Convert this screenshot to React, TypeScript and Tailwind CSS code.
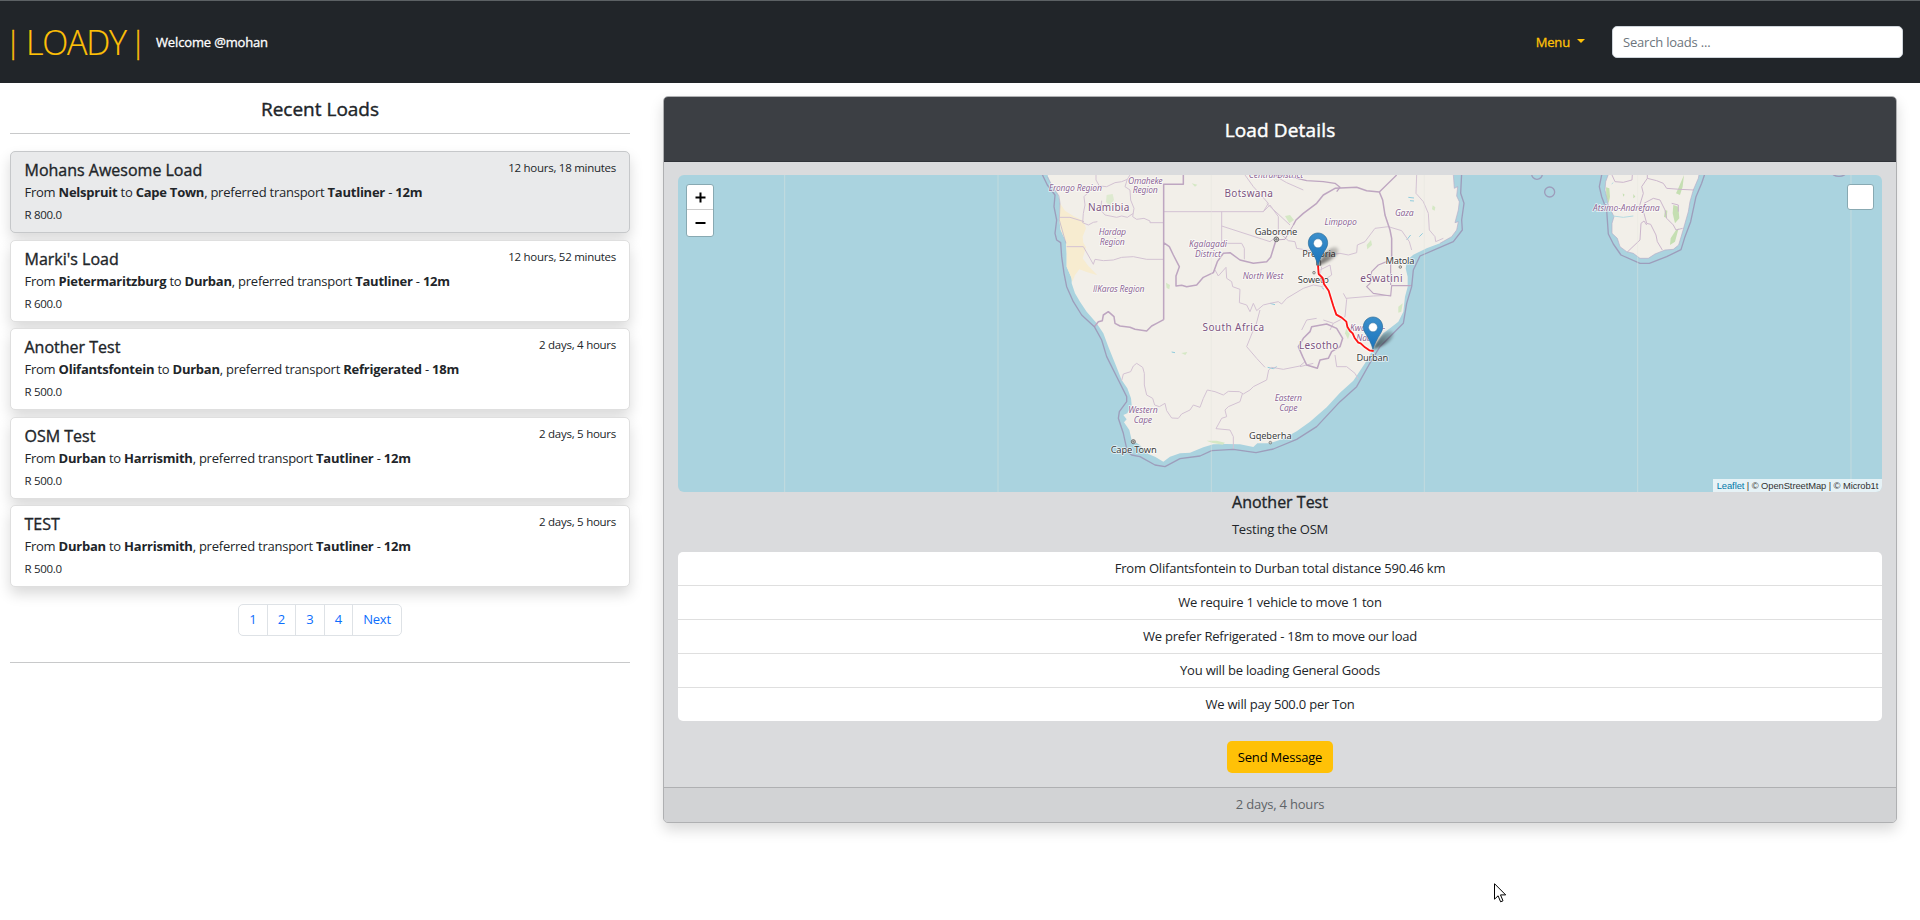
import React from "react";

type Load = {
  title: string;
  from: string;
  to: string;
  transport: string;
  size: string;
  price: string;
  age: string;
  active?: boolean;
};

const loads: Load[] = [
  { title: "Mohans Awesome Load", from: "Nelspruit", to: "Cape Town", transport: "Tautliner", size: "12m", price: "R 800.0", age: "12 hours, 18 minutes", active: true },
  { title: "Marki's Load", from: "Pietermaritzburg", to: "Durban", transport: "Tautliner", size: "12m", price: "R 600.0", age: "12 hours, 52 minutes" },
  { title: "Another Test", from: "Olifantsfontein", to: "Durban", transport: "Refrigerated", size: "18m", price: "R 500.0", age: "2 days, 4 hours" },
  { title: "OSM Test", from: "Durban", to: "Harrismith", transport: "Tautliner", size: "12m", price: "R 500.0", age: "2 days, 5 hours" },
  { title: "TEST", from: "Durban", to: "Harrismith", transport: "Tautliner", size: "12m", price: "R 500.0", age: "2 days, 5 hours" },
];

const details = [
  "From Olifantsfontein to Durban total distance 590.46 km",
  "We require 1 vehicle to move 1 ton",
  "We prefer Refrigerated - 18m to move our load",
  "You will be loading General Goods",
  "We will pay 500.0 per Ton",
];

function Header() {
  return (
    <header className="flex h-[83px] shrink-0 items-center border-t border-[#5c6164] bg-[#212529] pl-[5px] pr-[17px]">
      <div className="flex w-[151px] items-center text-[34px] font-light leading-[50px] text-[#ffc107]">
        <span className="w-[21px] text-[30px] [-webkit-text-stroke:0.3px]">|</span>
        <span className="w-[104px] tracking-[-1.2px] [-webkit-text-stroke:0.2px]">LOADY</span>
        <span className="text-[30px] [-webkit-text-stroke:0.3px]">|</span>
      </div>
      <div className="text-[13px] leading-5 tracking-[-0.15px] text-white [-webkit-text-stroke:0.3px]">Welcome @mohan</div>
      <div className="ml-auto flex items-center">
        <span className="text-[13px] leading-5 tracking-[-0.15px] text-[#ffc107] [-webkit-text-stroke:0.3px]">Menu</span>
        <span className="mb-[3px] ml-[7px] mr-[27px] h-0 w-0 border-x-[4px] border-t-[4px] border-x-transparent border-t-[#ffc107]" />
        <input
          className="h-8 w-[291px] rounded-[5px] border border-[#ced4da] bg-white px-[10px] text-[13px] tracking-[-0.2px] text-[#212529] outline-none placeholder:text-[#6c757d]"
          placeholder="Search loads ..."
        />
      </div>
    </header>
  );
}

function LoadCard({ load }: { load: Load }) {
  return (
    <article
      className={
        "flex h-[82px] flex-col rounded-[5px] border pl-[13.5px] pr-[13px] pt-[8px] shadow-[0_7px_14px_rgba(0,0,0,0.15)] " +
        (load.active ? "border-[#c6c8ca] bg-[#e9eaeb]" : "border-[#dfdfdf] bg-white")
      }
    >
      <div className="flex h-[22px] items-start justify-between">
        <h2 className="text-[16px] leading-[20px] [-webkit-text-stroke:0.35px]">{load.title}</h2>
        <span className="text-[11.5px] leading-4 tracking-[-0.27px]">{load.age}</span>
      </div>
      <p className="text-[13px] leading-5 tracking-[-0.24px]">
        From <b>{load.from}</b> to <b>{load.to}</b>, preferred transport <b>{load.transport}</b> - <b>{load.size}</b>
      </p>
      <p className="mt-[4px] text-[11.5px] leading-[18px] tracking-[-0.3px]">{load.price}</p>
    </article>
  );
}

function RecentLoads() {
  return (
    <section className="flex w-[620px] flex-col">
      <h1 className="h-[50px] pt-[12px] text-center text-[19px] leading-[28px] [-webkit-text-stroke:0.4px]">Recent Loads</h1>
      <hr className="border-t border-[#c8c9ca]" />
      <div className="mt-[17px] flex flex-col gap-[6.5px]">
        {loads.map((load) => (
          <LoadCard key={load.title} load={load} />
        ))}
      </div>
      <nav className="mt-[17px] flex h-8 items-stretch self-center rounded-[5px] border border-[#dee2e6] bg-white text-[13px] tracking-[-0.2px] text-[#0d6efd]">
        {["1", "2", "3", "4"].map((page) => (
          <a key={page} className="flex w-[28.5px] items-center justify-center border-r border-[#dee2e6]">{page}</a>
        ))}
        <a className="flex w-[48px] items-center justify-center">Next</a>
      </nav>
      <hr className="mt-[26px] border-t border-[#c8c9ca]" />
    </section>
  );
}

type LabelProps = { x: number; y: number; w: number; kind: "country" | "region" | "city"; children: string };

function MapLabel({ x, y, w, kind, children }: LabelProps) {
  const look =
    kind === "country"
      ? "fill-[#7d5580] text-[30px]"
      : kind === "region"
        ? "fill-[#8f6896] text-[26px] italic"
        : "fill-[#3d3d3d] text-[28px]";
  return (
    <text
      x={x}
      y={y}
      textLength={w}
      textAnchor="middle"
      className={look}
      stroke="#ffffff"
      strokeOpacity={0.7}
      strokeWidth={5}
      strokeLinejoin="round"
      paintOrder="stroke"
      fontFamily='"Noto Sans", sans-serif'
    >
      {children}
    </text>
  );
}

function Pin({ x, y }: { x: number; y: number }) {
  return (
    <g transform={`translate(${x} ${y})`}>
      <path d="M0 0C8-20 22-46 46-54C62-58 66-44 56-32C40-14 14-4 0 0Z" fill="url(#shade)" filter="url(#soft)" />
      <path
        d="M0 0C-5-18-13-32-21-45C-26-53-29-59-29-67C-29-84-16-97 0-97C16-97 29-84 29-67C29-59 26-53 21-45C13-32 5-18 0 0Z"
        fill="url(#pin)"
        stroke="#2e6c97"
        strokeWidth={2}
      />
      <circle cx={0} cy={-66} r={13.5} fill="#fff" stroke="#2e6c97" strokeWidth={1.5} />
    </g>
  );
}

const land = {
  africa:
    "M20 0L24 20L35 45L55 75L60 100L58 150L62 180L78 215L80 250L80 290L95 325L95 340L105 370L120 395L140 425L170 460L190 490L205 530L225 580L245 630L262 655L273 685L275 705L262 730L250 735L260 748L252 757L268 780L275 810L300 825L312 842L325 852L345 860L370 875L390 860L420 850L450 848L490 832L520 823L560 822L600 823L640 831L652 820L690 820L730 806L770 784L810 755L860 712L900 668L940 632L955 610L975 580L995 545L1010 520L1030 490L1050 475L1075 455L1090 425L1095 380L1103 350L1103 320L1097 295L1102 270L1120 254L1160 235L1200 220L1235 200L1250 180L1255 155L1245 158L1255 120L1258 95L1250 78L1253 50L1243 55L1240 0Z",
  madagascar:
    "M510 0L497 35L495 60L505 105L522 140L516 160L516 190L532 205L540 230L560 245L580 250L600 265L625 265L645 252L675 240L700 238L716 225L725 195L735 160L745 125L750 95L760 60L775 25L780 0Z",
};

function LoadMap() {
  return (
    <div className="relative h-[317px] overflow-hidden rounded-[6px] bg-[#aad3df]">
      <svg className="block h-[317px] w-[1204px]" viewBox="678 175 1204 317" fill="none">
        <defs>
          <linearGradient id="pin" x1="0" y1="0" x2="0" y2="1">
            <stop offset="0" stopColor="#3c8fcb" />
            <stop offset="1" stopColor="#1a74bd" />
          </linearGradient>
          <linearGradient id="shade" x1="0" y1="1" x2="1" y2="0">
            <stop offset="0" stopColor="#000" stopOpacity="0.6" />
            <stop offset="0.5" stopColor="#000" stopOpacity="0.4" />
            <stop offset="1" stopColor="#000" stopOpacity="0.12" />
          </linearGradient>
          <filter id="soft" x="-30%" y="-30%" width="160%" height="160%">
            <feGaussianBlur stdDeviation="4.5" />
          </filter>
        </defs>
        <g transform="translate(1040 170) scale(0.33333)" strokeLinejoin="round">
          <path d={land.africa} fill="#f2efe9" />
          <path d="M60 100L75 122L100 138L130 152L138 175L128 200L130 218L148 248L138 232L128 265L145 288L172 316L140 306L118 298L105 315L97 335L93 320L80 290L80 250L78 215L62 180L58 150Z" fill="#f7ecd0" />
          <g fill="#d5e8c5">
            <path d="M200 75L218 72L222 90L208 108L198 95Z" opacity={0.7} />
            <path d="M378 338L390 345L388 358L380 354Z" />
            <path d="M424 549L442 546L436 555Z" />
            <path d="M455 40L472 44L465 50Z" />
            <path d="M500 812L530 812L555 818L548 824L515 818Z" />
            <path d="M735 138L750 135L762 150L748 160Z" />
            <path d="M980 225L993 210L996 225L982 238Z" />
            <path d="M1178 106L1186 112L1184 122L1176 118Z" />
            <path d="M1075 410L1088 400L1084 425L1075 428Z" />
            <path d="M920 470L930 488L924 508L915 490Z" />
          </g>
          <g stroke="#8fcbdc" strokeWidth={3}>
            <path d="M395 546L405 548M690 400L705 404M683 592L700 596L710 590M1105 82L1122 84M1110 92L1122 93M1138 200L1148 190M1100 210L1112 195M845 352L852 358" />
          </g>
          {/* administrative boundaries */}
          <g stroke="#d3c2d3" strokeWidth={3}>
            <path d="M168 15V30L178 48L150 62L132 80L135 105L130 130L128 158L145 165L160 157L172 155M178 48L200 50L225 38L245 35L262 28L270 15M262 28L255 50L270 60L272 90L282 115L278 140L290 148L312 145L330 153L330 158H370M60 142L90 142L132 155M185 92L182 120L195 135L230 142L245 138L262 142L280 130" />
            <path d="M80 230H130L150 265L160 283L165 268L190 272L220 270L245 262L280 260L320 268L370 268" />
            <path d="M372 125H670L685 100L640 50L615 15M545 125V220H605L613 235V268M545 168L690 215L710 200M670 125L690 105L715 140V190M680 100L750 165" />
            <path d="M245 632L250 612L272 605L280 588L290 580L308 592L313 610V645L320 675L338 685L344 705L358 710L375 700L380 722L395 744L415 745L425 732L450 720L460 705L480 712L490 685L502 660L525 665L550 675L565 664L598 665L610 672L630 660L640 650L680 630L686 600L695 592L730 598L780 588L795 575" />
            <path d="M607 672L600 695L565 710L555 720L560 740L545 745L528 776L570 780L580 800V840" />
            <path d="M525 300L535 318L558 292L560 325L575 335L578 350L600 358L598 398L620 405L630 425L640 400L650 422L670 405L690 400L715 395L725 402L740 385L790 355L820 345L848 350" />
            <path d="M660 420L648 465L640 480L620 530L650 565L675 592M785 480L800 450L830 445M720 190L745 212L765 215L770 235L845 248L870 255L900 250L925 255L950 248L952 225L975 215L990 195L1005 175L1045 170L1085 182L1108 215L1115 240M910 370L920 388L915 440L900 450L880 460L870 480M918 385L1000 378L1050 376M885 555L890 590L920 590L945 610L955 628M880 460L850 450M845 290L840 315L850 350M840 300L870 285L875 315L860 325" />
            <path d="M1130 15L1128 70L1150 95L1165 130L1168 180L1185 200L1187 215L1210 205M700 15L740 38L790 60M755 15L720 0M780 590L820 580" />
          </g>
          {/* national boundaries */}
          <g stroke="#bea6c1" strokeWidth={4.6}>
            <path d="M371 449V43H430V15M371 218L388 230L400 255L418 290L408 318L408 348L425 346L440 350L470 345L490 322L520 308L532 275L550 250L570 248L600 270L640 280L680 275L692 262L708 210M760 165L768 150L790 130L830 100L850 75L885 55L950 52L980 62L1018 66L1028 90L1035 135L1050 180L1055 205V265" />
            <path d="M708 210L735 208L750 182L760 165" strokeWidth={3} />
            <path d="M163 470L175 455L187 452L190 435L205 425L222 440L225 460L240 468L270 472L285 478L320 483L335 468L350 460L371 449" />
            <path d="M700 15L750 20L800 32L850 35L885 40L900 52L890 65M1018 66L1070 15" strokeWidth={4} />
            <path d="M1052 292V275L1040 275L1015 285L995 305L990 340L980 350L1000 370L1052 378L1055 347H1115M1052 292V265M1052 292V345" strokeWidth={3.5} />
            <path d="M860 462L890 475L908 505L900 530L875 545L865 565L840 570L832 595L800 585L788 560L775 530L790 505L810 485L815 470Z" />
          </g>
          {/* territorial waters */}
          <g stroke="#9d9dbb" strokeWidth={4}>
            <path d="M5 10L22 45L45 75L42 110L50 150L45 190L50 210L62 218L65 260L72 310L80 350L100 395L125 435L163 470L185 510L200 560L235 630L260 680L260 695L238 725L235 745L250 790L262 845L275 855L300 860L345 885L375 890L420 866L480 858L515 842L580 838L648 848L700 837L770 808L830 770L900 695L950 650L995 570L1020 530L1060 490L1090 460L1100 400L1115 350L1120 300L1140 258L1240 215L1267 180L1265 150L1272 100L1262 70L1265 10" />
            <circle cx={1491} cy={12} r={16} />
            <circle cx={1529} cy={66} r={15} />
            <ellipse cx={2397} cy={6} rx={22} ry={13} />
          </g>
          <g stroke="#b7aec9" strokeWidth={2}>
            <path d="M22 20L35 45L57 78L60 100L58 150L78 220M1240 15L1243 55L1253 50L1250 78L1258 95L1255 120L1245 158L1255 155L1250 180L1235 200L1200 220" />
          </g>
          <g transform="translate(1200 0)">
            <path d={land.madagascar} fill="#f2efe9" />
            <path d="M498 52L508 55L510 80L506 100L499 80ZM715 55L732 15L728 50L720 75L708 70ZM700 105L715 110L718 145L705 160L698 130ZM708 180L716 175L705 215L690 225L692 205ZM675 120L682 122L680 145L672 140ZM580 72L586 80L580 85ZM548 70L554 74L550 80Z" fill="#c5dfb2" />
            <path d="M516 15L525 35L550 37L576 30L577 15M622 15V25L605 50L610 70L598 110L612 130L620 160L632 163L648 195L652 215L667 240M562 246L600 210L603 160L612 153L620 165M622 25L650 32L670 40L680 55L720 58L762 60M612 100L640 85L660 90L675 120L680 145L700 165L708 180L728 175M695 100L715 105L715 125" stroke="#cbb6cc" strokeWidth={3} />
            <path d={land.madagascar} stroke="#b7aec9" strokeWidth={2} />
            <path d="M486 10L478 50L485 80L500 120L505 192L520 222L543 255L600 280H628L680 260L723 239L735 200L752 155L768 80L785 40L795 10" stroke="#9d9dbb" strokeWidth={4} />
            <path d="M520 138L550 142L580 138M515 42L520 38" stroke="#b5dbe2" strokeWidth={3} />
          </g>
          <g stroke="#e6e7e0" strokeWidth={2.5} opacity={0.5}>
            <path d="M-766 0V970M-126 0V970M514 0V970M1153 0V970M1793 0V970M2433 0V970" />
          </g>
          <g stroke="#6a6a6a" strokeWidth={3} fill="#cfcfca">
            <circle cx={280} cy={815} r={6} />
            <circle cx={280} cy={815} r={1.5} />
            <circle cx={709} cy={208} r={7} />
            <circle cx={709} cy={208} r={2} />
            <circle cx={822} cy={308} r={4} strokeWidth={2} />
            <circle cx={1081} cy={291} r={4} strokeWidth={2} />
            <circle cx={691} cy={818} r={4} strokeWidth={2} />
            <path d="M830 272H842V286H830Z" />
          </g>
          <MapLabel x={106} y={62} w={160} kind="region">Erongo Region</MapLabel>
          <MapLabel x={316} y={42} w={104} kind="region">Omaheke</MapLabel>
          <MapLabel x={316} y={70} w={75} kind="region">Region</MapLabel>
          <MapLabel x={217} y={195} w={82} kind="region">Hardap</MapLabel>
          <MapLabel x={217} y={224} w={75} kind="region">Region</MapLabel>
          <MapLabel x={236} y={367} w={155} kind="region">ǁKaras Region</MapLabel>
          <MapLabel x={504} y={232} w={114} kind="region">Kgalagadi</MapLabel>
          <MapLabel x={504} y={262} w={78} kind="region">District</MapLabel>
          <MapLabel x={669} y={326} w={122} kind="region">North West</MapLabel>
          <MapLabel x={708} y={25} w={163} kind="region">Central District</MapLabel>
          <MapLabel x={902} y={164} w={97} kind="region">Limpopo</MapLabel>
          <MapLabel x={1093} y={137} w={56} kind="region">Gaza</MapLabel>
          <MapLabel x={309} y={728} w={88} kind="region">Western</MapLabel>
          <MapLabel x={309} y={758} w={55} kind="region">Cape</MapLabel>
          <MapLabel x={745} y={693} w={82} kind="region">Eastern</MapLabel>
          <MapLabel x={745} y={723} w={55} kind="region">Cape</MapLabel>
          <MapLabel x={983} y={482} w={106} kind="region">KwaZulu-</MapLabel>
          <MapLabel x={979} y={512} w={60} kind="region">Natal</MapLabel>
          <MapLabel x={1759} y={124} w={200} kind="region">Atsimo-Andrefana</MapLabel>
          <MapLabel x={206} y={122} w={124} kind="country">Namibia</MapLabel>
          <MapLabel x={626} y={80} w={145} kind="country">Botswana</MapLabel>
          <MapLabel x={580} y={483} w={185} kind="country">South Africa</MapLabel>
          <MapLabel x={836} y={538} w={118} kind="country">Lesotho</MapLabel>
          <MapLabel x={1024} y={337} w={127} kind="country">eSwatini</MapLabel>
          <MapLabel x={281} y={850} w={138} kind="city">Cape Town</MapLabel>
          <MapLabel x={708} y={194} w={128} kind="city">Gaborone</MapLabel>
          <MapLabel x={837} y={262} w={101} kind="city">Pretoria</MapLabel>
          <MapLabel x={820} y={338} w={93} kind="city">Soweto</MapLabel>
          <MapLabel x={1080} y={281} w={87} kind="city">Matola</MapLabel>
          <MapLabel x={997} y={574} w={95} kind="city">Durban</MapLabel>
          <MapLabel x={691} y={806} w={128} kind="city">Gqeberha</MapLabel>
          <path d="M834 286L836 312L848 324L852 342L866 362L880 408L889 434L905 443L919 455L922 470L930 483L938 490L944 504L955 518L962 520L975 532L988 541L1001 543" stroke="#ffffff" strokeOpacity={0.5} strokeWidth={13} />
          <path d="M834 286L836 312L848 324L852 342L866 362L880 408L889 434L905 443L919 455L922 470L930 483L938 490L944 504L955 518L962 520L975 532L988 541L1001 543" stroke="#ff1414" strokeWidth={5.5} />
          <Pin x={834} y={286} />
          <Pin x={999} y={538} />
        </g>
      </svg>
      <div className="absolute left-[8px] top-[9px] flex h-[53px] w-[28px] flex-col rounded-[3px] border border-[#88a9b2] bg-white">
        <button className="flex h-[25px] items-center justify-center border-b border-[#ccc]">
          <svg className="h-[11px] w-[11px]" viewBox="0 0 11 11" stroke="#000" strokeWidth={2}><path d="M5.5 .5V10.5M.5 5.5H10.5" /></svg>
        </button>
        <button className="flex flex-1 items-center justify-center">
          <svg className="h-[11px] w-[11px]" viewBox="0 0 11 11" stroke="#000" strokeWidth={2}><path d="M.5 5H10.5" /></svg>
        </button>
      </div>
      <div className="absolute right-[8px] top-[9px] h-[26px] w-[27px] rounded-[3px] border border-[#88a9b2] bg-white" />
      <div className="absolute bottom-0 right-0 flex h-[13px] w-[169px] items-center justify-center whitespace-pre bg-white/70 font-['Liberation_Sans'] text-[9.4px] leading-[13px] tracking-[-0.08px] text-[#333]">
        <span className="text-[#0078a8]">Leaflet</span> | © OpenStreetMap | © Microb1t
      </div>
    </div>
  );
}

function LoadDetails() {
  return (
    <section className="flex h-[727px] w-[1234px] flex-col overflow-hidden rounded-[5px] border border-[#afb0b2] bg-[#dadbdd] text-center shadow-[0_7px_14px_rgba(0,0,0,0.15)]">
      <h1 className="h-[65px] shrink-0 border-b border-[#303338] bg-[#3c3f44] pt-[19px] text-[19px] leading-[28px] tracking-[0.15px] text-white [-webkit-text-stroke:0.45px]">Load Details</h1>
      <div className="flex flex-1 flex-col px-[14px] pt-[13px]">
        <LoadMap />
        <h2 className="text-[16px] leading-[21px] [-webkit-text-stroke:0.35px]">Another Test</h2>
        <p className="mt-[6px] text-[13px] leading-5 tracking-[-0.2px]">Testing the OSM</p>
        <ul className="mt-[12.5px] overflow-hidden rounded-[5px] bg-white">
          {details.map((line) => (
            <li key={line} className="h-[34.2px] border-b border-[#dfdfdf] pt-[6px] text-[13px] leading-[21px] tracking-[-0.21px] last:h-[33.2px] last:border-b-0">{line}</li>
          ))}
        </ul>
        <button className="mt-[20px] h-8 w-[106px] self-center rounded-[5px] bg-[#ffc107] text-[13px] tracking-[-0.2px] text-black">Send Message</button>
      </div>
      <footer className="h-[35px] shrink-0 border-t border-[#afb0b2] bg-[#d2d3d5] pt-[6px] text-[13px] leading-[21px] tracking-[-0.2px] text-[#5f6468]">2 days, 4 hours</footer>
    </section>
  );
}

export default function App() {
  return (
    <div className="relative flex h-[920px] w-[1920px] flex-col overflow-hidden bg-white font-['Open_Sans','Noto_Sans',sans-serif] text-[#212529]">
      <Header />
      <main className="flex gap-[33px] pl-[10px]">
        <RecentLoads />
        <div className="pt-[13px]">
          <LoadDetails />
        </div>
      </main>
      <svg className="absolute left-[1494px] top-[883px] h-[20px] w-[13px]" viewBox="0 0 13 20" fill="#fff" stroke="#000">
        <path d="M.5 .7V16.2L4.1 12.8L6.6 18.8L9 17.8L6.5 11.9H11.7Z" />
      </svg>
    </div>
  );
}
